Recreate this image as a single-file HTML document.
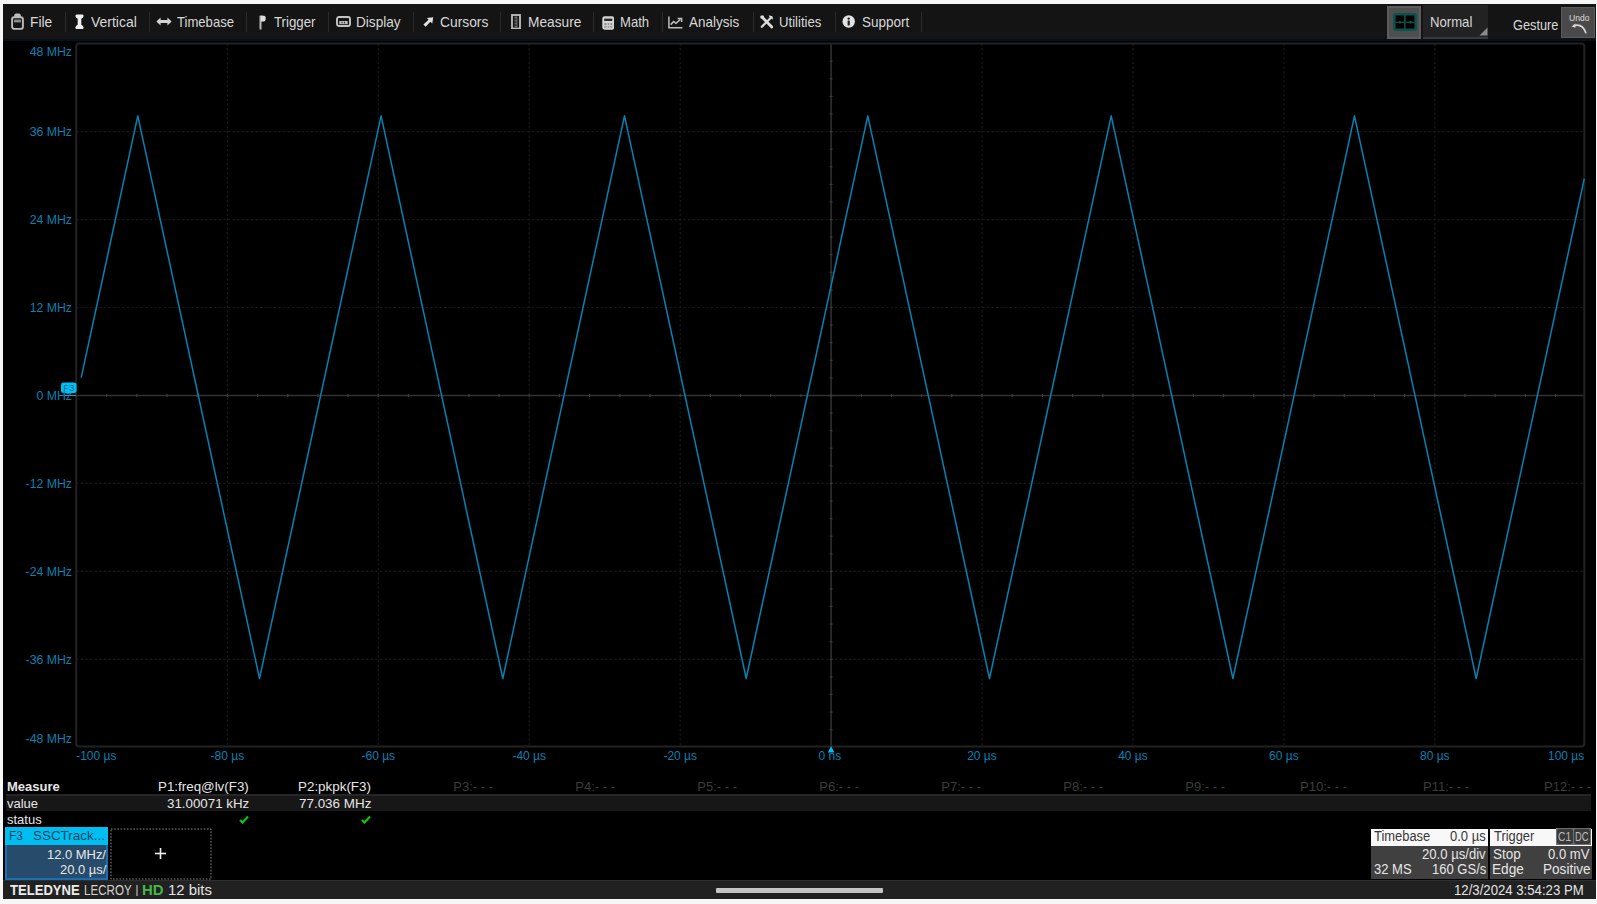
<!DOCTYPE html>
<html><head><meta charset="utf-8">
<style>
html,body{margin:0;padding:0;}
body{width:1597px;height:904px;background:#f6f6f6;position:relative;overflow:hidden;font-family:"Liberation Sans",sans-serif;}
.abs{position:absolute}
#frame{position:absolute;left:3px;top:4px;width:1593px;height:894px;background:#000;}
#tbar{position:absolute;left:3px;top:4px;width:1593px;height:35px;background:#141414;}
#tbline{position:absolute;left:3px;top:39px;width:1593px;height:2px;background:#07111a;}
.ic{position:absolute;line-height:0}
.ic svg{display:block}
.tt{position:absolute;top:13.5px;font-size:14.5px;line-height:16px;color:#d8d8d8;white-space:nowrap;transform-origin:0 0}
.sep{position:absolute;top:12px;width:1px;height:20px;background:#2a2a2a}
svg#plot{position:absolute;left:0;top:0}
.g{stroke:#181818;stroke-width:1.2;stroke-dasharray:2.3 2.3}
.ax{stroke:#323232;stroke-width:1.5}
.tk{stroke:#3c3c3c;stroke-width:1.2}
.bd{fill:none;stroke:#222;stroke-width:2}
.tr{fill:none;stroke:#0682b2;stroke-width:1.5;stroke-linejoin:round}
.yl{position:absolute;left:0;width:72px;text-align:right;font-size:12.3px;line-height:14px;color:#0b80b2;white-space:nowrap}
.xl{position:absolute;top:749px;font-size:12px;line-height:14px;color:#0b80b2;white-space:nowrap}
.mh{position:absolute;top:779px;width:130px;text-align:right;font-size:13px;line-height:15px;color:#e6e6e6;white-space:nowrap}
.mh.dim{color:#3c3c3c}
.mv{position:absolute;top:796px;width:130px;text-align:right;font-size:13px;line-height:15px;color:#e6e6e6;white-space:nowrap}
.ck{position:absolute;top:815px}
.ft{position:absolute;white-space:nowrap;transform-origin:0 0}
.lab{position:absolute;font-size:13px;line-height:15px;color:#e6e6e6;white-space:nowrap}
</style></head><body>
<div id="frame"></div>
<div id="tbar"></div>
<div id="tbline"></div>
<div class="ic" style="left:11px;top:13.3px"><svg width="13" height="17" viewBox="0 0 13 17"><rect x="1.1" y="4.3" width="10.8" height="11.6" rx="2.2" fill="none" stroke="#bcbcbc" stroke-width="1.9"/><path d="M3.2,4.6 L3.2,2.6 Q3.2,0.6 5.2,0.6 L7.8,0.6 Q9.8,0.6 9.8,2.6 L9.8,4.6 Z" fill="#bcbcbc"/><rect x="3" y="6.6" width="7" height="2.8" fill="#8c8c8c"/></svg></div><div class="tt" style="left:30.00px;transform:scaleX(0.952)">File</div><div class="ic" style="left:74.5px;top:13.6px"><svg width="9" height="15.5" viewBox="0 0 9 15.5"><path d="M1.5,0.5 L7.5,0.5 Q8.6,0.5 8.6,2 Q8.6,3.6 6.3,4.8 L6.3,10.7 Q8.6,11.9 8.6,13.5 Q8.6,15 7.5,15 L1.5,15 Q0.4,15 0.4,13.5 Q0.4,11.9 2.7,10.7 L2.7,4.8 Q0.4,3.6 0.4,2 Q0.4,0.5 1.5,0.5 Z" fill="#f0f0f0"/></svg></div><div class="tt" style="left:91.43px;transform:scaleX(0.964)">Vertical</div><div class="ic" style="left:156px;top:17.3px"><svg width="16" height="9" viewBox="0 0 16 9"><path d="M0.4,4.5 L4.6,0.6 L4.6,3.1 L11.4,3.1 L11.4,0.6 L15.6,4.5 L11.4,8.4 L11.4,5.9 L4.6,5.9 L4.6,8.4 Z" fill="#d4d4d4"/></svg></div><div class="tt" style="left:176.54px;transform:scaleX(0.903)">Timebase</div><div class="ic" style="left:259.3px;top:14.5px"><svg width="7" height="15" viewBox="0 0 7 15"><rect x="0.5" y="0.5" width="2" height="14" rx="0.6" fill="#b8b8b8"/><path d="M2,0.5 L5,0.8 Q6.6,1 6.6,2.6 L6.6,4.6 Q6.6,6.2 5,6.4 L2,6.6 Z" fill="#e0e0e0"/></svg></div><div class="tt" style="left:274.24px;transform:scaleX(0.914)">Trigger</div><div class="ic" style="left:335.8px;top:16.4px"><svg width="15" height="11" viewBox="0 0 15 11"><rect x="1" y="1" width="13" height="9" rx="2" fill="none" stroke="#c4c4c4" stroke-width="1.9"/><rect x="3.3" y="5" width="8.4" height="3.2" fill="#bdbdbd"/><rect x="5.5" y="5.8" width="1" height="1.6" fill="#333"/><rect x="8" y="5.8" width="1" height="1.6" fill="#333"/></svg></div><div class="tt" style="left:355.71px;transform:scaleX(0.938)">Display</div><div class="ic" style="left:423px;top:16.8px"><svg width="10.5" height="10" viewBox="0 0 10.5 10"><path d="M10.2,0.2 L3.8,0.9 L5.6,2.8 L0.4,7.5 L2.6,9.8 L7.4,4.8 L9.3,6.6 Z" fill="#e2e2e2"/></svg></div><div class="tt" style="left:440.01px;transform:scaleX(0.953)">Cursors</div><div class="ic" style="left:511.2px;top:13.8px"><svg width="10" height="15.5" viewBox="0 0 10 15.5"><rect x="1" y="1" width="8" height="13.5" fill="none" stroke="#c0c0c0" stroke-width="1.8"/><rect x="3.5" y="2.5" width="3" height="10.5" fill="#6a6a6a"/><rect x="3.5" y="4.5" width="2" height="1.2" fill="#1a1a1a"/><rect x="3.5" y="7.5" width="2" height="1.2" fill="#1a1a1a"/><rect x="3.5" y="10.5" width="2" height="1.2" fill="#1a1a1a"/></svg></div><div class="tt" style="left:527.60px;transform:scaleX(0.945)">Measure</div><div class="ic" style="left:601.7px;top:15.7px"><svg width="12.5" height="14" viewBox="0 0 12.5 14"><rect x="0.3" y="0.3" width="11.9" height="13.4" rx="2.4" fill="#d6d6d6"/><rect x="2.2" y="2.6" width="8.1" height="2.4" fill="#2a2a2a"/><rect x="2.2" y="7" width="8.1" height="4.8" fill="#9a9a9a"/><rect x="4.8" y="7" width="0.9" height="4.8" fill="#d6d6d6"/><rect x="7.3" y="7" width="0.9" height="4.8" fill="#d6d6d6"/><rect x="2.2" y="9.2" width="8.1" height="0.9" fill="#d6d6d6"/></svg></div><div class="tt" style="left:620.36px;transform:scaleX(0.901)">Math</div><div class="ic" style="left:668.4px;top:16px"><svg width="15" height="12.5" viewBox="0 0 15 12.5"><path d="M0.9,0.5 L0.9,11.7 L14.4,11.7" fill="none" stroke="#bdbdbd" stroke-width="1.5"/><path d="M2.6,8.6 L5.6,5.6 L8,7.4 L12.4,3.4" fill="none" stroke="#bdbdbd" stroke-width="1.5"/><path d="M9.6,2.4 L13.6,2.4 L13.6,6" fill="none" stroke="#bdbdbd" stroke-width="1.5"/></svg></div><div class="tt" style="left:689.30px;transform:scaleX(0.929)">Analysis</div><div class="ic" style="left:759.8px;top:14.9px"><svg width="13.5" height="14" viewBox="0 0 13.5 14"><path d="M2.2,2.2 L11.8,12" stroke="#dcdcdc" stroke-width="2.8" stroke-linecap="round"/><path d="M11.4,2.2 L1.8,11.8" stroke="#dcdcdc" stroke-width="2.2" stroke-linecap="round"/><path d="M8.6,0.5 Q13.3,0.2 13,4.8 L11.2,3 L10.3,3.6 Z" fill="#dcdcdc"/><rect x="0.4" y="0.4" width="3.6" height="3" rx="1" fill="#dcdcdc"/></svg></div><div class="tt" style="left:779.11px;transform:scaleX(0.908)">Utilities</div><div class="ic" style="left:841.8px;top:15.2px"><svg width="13.5" height="13" viewBox="0 0 13.5 13"><circle cx="6.7" cy="6.5" r="6.2" fill="#e2e2e2"/><circle cx="6.7" cy="3.6" r="1.2" fill="#1e1e1e"/><rect x="5.6" y="5.6" width="2.2" height="4.8" rx="0.4" fill="#1e1e1e"/></svg></div><div class="tt" style="left:861.89px;transform:scaleX(0.930)">Support</div><div class="sep" style="left:64.5px"></div><div class="sep" style="left:148.9px"></div><div class="sep" style="left:245.9px"></div><div class="sep" style="left:327.8px"></div><div class="sep" style="left:412.8px"></div><div class="sep" style="left:500.3px"></div><div class="sep" style="left:592.8px"></div><div class="sep" style="left:661.8px"></div><div class="sep" style="left:752.8px"></div><div class="sep" style="left:834.9px"></div><div class="sep" style="left:920.9px"></div>
<!-- right toolbar -->
<div class="abs" style="left:1387.4px;top:5.5px;width:34px;height:33px;background:#4e4e4e;box-sizing:border-box;border:2px solid #5c5c5c"></div>
<svg class="abs" style="left:1393px;top:13.4px" width="24" height="18" viewBox="0 0 24 18"><rect x="1.3" y="1.3" width="21.4" height="15.4" rx="1.5" fill="#000" stroke="#0a534e" stroke-width="2.6"/><line x1="11.8" y1="1" x2="11.8" y2="17" stroke="#0a504b" stroke-width="1.6"/><line x1="1" y1="9.3" x2="23" y2="9.3" stroke="#0a504b" stroke-width="1.3"/><circle cx="7" cy="9.3" r="1.2" fill="#0b5d57"/><circle cx="17.6" cy="9.3" r="1.2" fill="#0b5d57"/></svg>
<div class="abs" style="left:1423px;top:4.5px;width:64.5px;height:34px;background:#222"></div>
<div class="abs" style="left:1423px;top:36.5px;width:64.5px;height:2px;background:#3a3a3a"></div>
<svg class="abs" style="left:1479px;top:27px" width="9" height="9" viewBox="0 0 9 9"><path d="M8.5,0.5 L8.5,8.5 L0.5,8.5 Z" fill="#8a8a8a"/></svg>
<div class="tt" style="left:1430.45px;transform:scaleX(0.906)">Normal</div>
<div class="tt" style="left:1512.96px;top:16.5px;transform:scaleX(0.881)">Gesture</div>
<div class="abs" style="left:1561.3px;top:7px;width:34px;height:30.5px;background:#4a4a4a;box-sizing:border-box;border:1px solid #5a5a5a"></div>
<div class="ft" style="left:1568.56px;top:12.21px;font-size:9.5px;line-height:11px;color:#dcdcdc;transform:scaleX(0.898);">Undo</div>
<svg class="abs" style="left:1570px;top:22px" width="18" height="13" viewBox="0 0 18 13"><path d="M4,3.6 Q12.5,1.2 15.8,10.8" fill="none" stroke="#d8d8d8" stroke-width="1.6" stroke-linecap="round"/><path d="M1.5,4.4 L5.6,1.6 L5.4,5.8 Z" fill="#d8d8d8"/></svg>

<svg id="plot" width="1597" height="904">
<line x1="227.4" y1="43.5" x2="227.4" y2="746.5" class="g"/><line x1="378.3" y1="43.5" x2="378.3" y2="746.5" class="g"/><line x1="529.2" y1="43.5" x2="529.2" y2="746.5" class="g"/><line x1="680.2" y1="43.5" x2="680.2" y2="746.5" class="g"/><line x1="982.0" y1="43.5" x2="982.0" y2="746.5" class="g"/><line x1="1133.0" y1="43.5" x2="1133.0" y2="746.5" class="g"/><line x1="1283.9" y1="43.5" x2="1283.9" y2="746.5" class="g"/><line x1="1434.8" y1="43.5" x2="1434.8" y2="746.5" class="g"/><line x1="76.2" y1="131.6" x2="1584.3" y2="131.6" class="g"/><line x1="76.2" y1="219.6" x2="1584.3" y2="219.6" class="g"/><line x1="76.2" y1="307.5" x2="1584.3" y2="307.5" class="g"/><line x1="76.2" y1="483.4" x2="1584.3" y2="483.4" class="g"/><line x1="76.2" y1="571.4" x2="1584.3" y2="571.4" class="g"/><line x1="76.2" y1="659.3" x2="1584.3" y2="659.3" class="g"/><line x1="831.1" y1="43.5" x2="831.1" y2="746.5" class="ax"/><line x1="76.2" y1="395.5" x2="1584.3" y2="395.5" class="ax"/><line x1="106.7" y1="394.0" x2="106.7" y2="397.0" class="tk"/><line x1="136.8" y1="394.0" x2="136.8" y2="397.0" class="tk"/><line x1="167.0" y1="394.0" x2="167.0" y2="397.0" class="tk"/><line x1="197.2" y1="394.0" x2="197.2" y2="397.0" class="tk"/><line x1="227.4" y1="394.0" x2="227.4" y2="397.0" class="tk"/><line x1="257.6" y1="394.0" x2="257.6" y2="397.0" class="tk"/><line x1="287.8" y1="394.0" x2="287.8" y2="397.0" class="tk"/><line x1="318.0" y1="394.0" x2="318.0" y2="397.0" class="tk"/><line x1="348.1" y1="394.0" x2="348.1" y2="397.0" class="tk"/><line x1="378.3" y1="394.0" x2="378.3" y2="397.0" class="tk"/><line x1="408.5" y1="394.0" x2="408.5" y2="397.0" class="tk"/><line x1="438.7" y1="394.0" x2="438.7" y2="397.0" class="tk"/><line x1="468.9" y1="394.0" x2="468.9" y2="397.0" class="tk"/><line x1="499.1" y1="394.0" x2="499.1" y2="397.0" class="tk"/><line x1="529.2" y1="394.0" x2="529.2" y2="397.0" class="tk"/><line x1="559.4" y1="394.0" x2="559.4" y2="397.0" class="tk"/><line x1="589.6" y1="394.0" x2="589.6" y2="397.0" class="tk"/><line x1="619.8" y1="394.0" x2="619.8" y2="397.0" class="tk"/><line x1="650.0" y1="394.0" x2="650.0" y2="397.0" class="tk"/><line x1="680.2" y1="394.0" x2="680.2" y2="397.0" class="tk"/><line x1="710.4" y1="394.0" x2="710.4" y2="397.0" class="tk"/><line x1="740.5" y1="394.0" x2="740.5" y2="397.0" class="tk"/><line x1="770.7" y1="394.0" x2="770.7" y2="397.0" class="tk"/><line x1="800.9" y1="394.0" x2="800.9" y2="397.0" class="tk"/><line x1="831.1" y1="394.0" x2="831.1" y2="397.0" class="tk"/><line x1="861.3" y1="394.0" x2="861.3" y2="397.0" class="tk"/><line x1="891.5" y1="394.0" x2="891.5" y2="397.0" class="tk"/><line x1="921.7" y1="394.0" x2="921.7" y2="397.0" class="tk"/><line x1="951.8" y1="394.0" x2="951.8" y2="397.0" class="tk"/><line x1="982.0" y1="394.0" x2="982.0" y2="397.0" class="tk"/><line x1="1012.2" y1="394.0" x2="1012.2" y2="397.0" class="tk"/><line x1="1042.4" y1="394.0" x2="1042.4" y2="397.0" class="tk"/><line x1="1072.6" y1="394.0" x2="1072.6" y2="397.0" class="tk"/><line x1="1102.8" y1="394.0" x2="1102.8" y2="397.0" class="tk"/><line x1="1132.9" y1="394.0" x2="1132.9" y2="397.0" class="tk"/><line x1="1163.1" y1="394.0" x2="1163.1" y2="397.0" class="tk"/><line x1="1193.3" y1="394.0" x2="1193.3" y2="397.0" class="tk"/><line x1="1223.5" y1="394.0" x2="1223.5" y2="397.0" class="tk"/><line x1="1253.7" y1="394.0" x2="1253.7" y2="397.0" class="tk"/><line x1="1283.9" y1="394.0" x2="1283.9" y2="397.0" class="tk"/><line x1="1314.1" y1="394.0" x2="1314.1" y2="397.0" class="tk"/><line x1="1344.2" y1="394.0" x2="1344.2" y2="397.0" class="tk"/><line x1="1374.4" y1="394.0" x2="1374.4" y2="397.0" class="tk"/><line x1="1404.6" y1="394.0" x2="1404.6" y2="397.0" class="tk"/><line x1="1434.8" y1="394.0" x2="1434.8" y2="397.0" class="tk"/><line x1="1465.0" y1="394.0" x2="1465.0" y2="397.0" class="tk"/><line x1="1495.2" y1="394.0" x2="1495.2" y2="397.0" class="tk"/><line x1="1525.4" y1="394.0" x2="1525.4" y2="397.0" class="tk"/><line x1="1555.5" y1="394.0" x2="1555.5" y2="397.0" class="tk"/><line x1="829.6" y1="61.2" x2="832.6" y2="61.2" class="tk"/><line x1="829.6" y1="78.8" x2="832.6" y2="78.8" class="tk"/><line x1="829.6" y1="96.4" x2="832.6" y2="96.4" class="tk"/><line x1="829.6" y1="114.0" x2="832.6" y2="114.0" class="tk"/><line x1="829.6" y1="131.6" x2="832.6" y2="131.6" class="tk"/><line x1="829.6" y1="149.2" x2="832.6" y2="149.2" class="tk"/><line x1="829.6" y1="166.8" x2="832.6" y2="166.8" class="tk"/><line x1="829.6" y1="184.4" x2="832.6" y2="184.4" class="tk"/><line x1="829.6" y1="202.0" x2="832.6" y2="202.0" class="tk"/><line x1="829.6" y1="219.6" x2="832.6" y2="219.6" class="tk"/><line x1="829.6" y1="237.1" x2="832.6" y2="237.1" class="tk"/><line x1="829.6" y1="254.7" x2="832.6" y2="254.7" class="tk"/><line x1="829.6" y1="272.3" x2="832.6" y2="272.3" class="tk"/><line x1="829.6" y1="289.9" x2="832.6" y2="289.9" class="tk"/><line x1="829.6" y1="307.5" x2="832.6" y2="307.5" class="tk"/><line x1="829.6" y1="325.1" x2="832.6" y2="325.1" class="tk"/><line x1="829.6" y1="342.7" x2="832.6" y2="342.7" class="tk"/><line x1="829.6" y1="360.3" x2="832.6" y2="360.3" class="tk"/><line x1="829.6" y1="377.9" x2="832.6" y2="377.9" class="tk"/><line x1="829.6" y1="395.4" x2="832.6" y2="395.4" class="tk"/><line x1="829.6" y1="413.0" x2="832.6" y2="413.0" class="tk"/><line x1="829.6" y1="430.6" x2="832.6" y2="430.6" class="tk"/><line x1="829.6" y1="448.2" x2="832.6" y2="448.2" class="tk"/><line x1="829.6" y1="465.8" x2="832.6" y2="465.8" class="tk"/><line x1="829.6" y1="483.4" x2="832.6" y2="483.4" class="tk"/><line x1="829.6" y1="501.0" x2="832.6" y2="501.0" class="tk"/><line x1="829.6" y1="518.6" x2="832.6" y2="518.6" class="tk"/><line x1="829.6" y1="536.2" x2="832.6" y2="536.2" class="tk"/><line x1="829.6" y1="553.8" x2="832.6" y2="553.8" class="tk"/><line x1="829.6" y1="571.4" x2="832.6" y2="571.4" class="tk"/><line x1="829.6" y1="588.9" x2="832.6" y2="588.9" class="tk"/><line x1="829.6" y1="606.5" x2="832.6" y2="606.5" class="tk"/><line x1="829.6" y1="624.1" x2="832.6" y2="624.1" class="tk"/><line x1="829.6" y1="641.7" x2="832.6" y2="641.7" class="tk"/><line x1="829.6" y1="659.3" x2="832.6" y2="659.3" class="tk"/><line x1="829.6" y1="676.9" x2="832.6" y2="676.9" class="tk"/><line x1="829.6" y1="694.5" x2="832.6" y2="694.5" class="tk"/><line x1="829.6" y1="712.1" x2="832.6" y2="712.1" class="tk"/><line x1="829.6" y1="729.7" x2="832.6" y2="729.7" class="tk"/><rect x="76.2" y="43.5" width="1508.1" height="703.0" rx="3" class="bd"/><path d="M81.2,377.6 L137.8,115.8 L259.5,678.5 L381.1,115.8 L502.8,678.5 L624.5,115.8 L746.2,678.5 L867.8,115.8 L989.5,678.5 L1111.2,115.8 L1232.9,678.5 L1354.5,115.8 L1476.2,678.5 L1584.3,178.7" class="tr"/><line x1="60" y1="395.5" x2="76.2" y2="395.5" stroke="#0aa8e0" stroke-width="1"/><rect x="61" y="382.5" width="15.5" height="10.5" rx="2.5" fill="#00bff2"/><text x="68.8" y="391.3" font-size="9.5" fill="#0a6a90" text-anchor="middle" font-family="Liberation Sans">F3</text><path d="M831.1,746 L834.3,752.5 L827.9,752.5 Z" fill="#00bff2"/>
</svg>
<div class="yl" style="top:45.0px">48 MHz</div><div class="yl" style="top:125.1px">36 MHz</div><div class="yl" style="top:213.1px">24 MHz</div><div class="yl" style="top:301.0px">12 MHz</div><div class="yl" style="top:388.9px">0 MHz</div><div class="yl" style="top:476.9px">-12 MHz</div><div class="yl" style="top:564.9px">-24 MHz</div><div class="yl" style="top:652.8px">-36 MHz</div><div class="yl" style="top:732.0px">-48 MHz</div>
<div class="xl" style="left:76.2px">-100 µs</div><div class="xl" style="left:177.4px;width:100px;text-align:center">-80 µs</div><div class="xl" style="left:328.3px;width:100px;text-align:center">-60 µs</div><div class="xl" style="left:479.2px;width:100px;text-align:center">-40 µs</div><div class="xl" style="left:630.2px;width:100px;text-align:center">-20 µs</div><div class="xl" style="left:779.9px;width:100px;text-align:center">0 ns</div><div class="xl" style="left:932.0px;width:100px;text-align:center">20 µs</div><div class="xl" style="left:1083.0px;width:100px;text-align:center">40 µs</div><div class="xl" style="left:1233.9px;width:100px;text-align:center">60 µs</div><div class="xl" style="left:1384.8px;width:100px;text-align:center">80 µs</div><div class="xl" style="left:1484.3px;width:100px;text-align:right">100 µs</div>

<div class="lab" style="left:7px;top:779px;font-weight:bold">Measure</div>
<div class="abs" style="left:6px;top:794px;width:1585px;height:17px;background:#171717;border-top:2.5px solid #262626;box-sizing:border-box"></div>
<div class="lab" style="left:7px;top:796px">value</div>
<div class="lab" style="left:7px;top:812px">status</div>
<svg class="ck" style="left:239.0px" width="10" height="9" viewBox="0 0 10 9"><path d="M1,5 L3.5,7.5 L9,1.5" fill="none" stroke="#08c808" stroke-width="2.2"/></svg><svg class="ck" style="left:361.0px" width="10" height="9" viewBox="0 0 10 9"><path d="M1,5 L3.5,7.5 L9,1.5" fill="none" stroke="#08c808" stroke-width="2.2"/></svg><div class="mh dim" style="left:363.0px">P3:- - -</div><div class="mh dim" style="left:485.0px">P4:- - -</div><div class="mh dim" style="left:607.0px">P5:- - -</div><div class="mh dim" style="left:729.0px">P6:- - -</div><div class="mh dim" style="left:851.0px">P7:- - -</div><div class="mh dim" style="left:973.0px">P8:- - -</div><div class="mh dim" style="left:1095.0px">P9:- - -</div><div class="mh dim" style="left:1217.0px">P10:- - -</div><div class="mh dim" style="left:1339.0px">P11:- - -</div><div class="mh dim" style="left:1461.0px">P12:- - -</div><div class="ft" style="left:158.13px;top:779.00px;font-size:13px;line-height:16px;color:#e6e6e6;transform:scaleX(1.028);">P1:freq@lv(F3)</div><div class="ft" style="left:166.57px;top:795.80px;font-size:13px;line-height:16px;color:#e6e6e6;transform:scaleX(1.025);">31.00071 kHz</div><div class="ft" style="left:298.43px;top:779.00px;font-size:13px;line-height:16px;color:#e6e6e6;transform:scaleX(1.030);">P2:pkpk(F3)</div><div class="ft" style="left:298.83px;top:795.80px;font-size:13px;line-height:16px;color:#e6e6e6;transform:scaleX(1.032);">77.036 MHz</div>

<div class="abs" style="left:5.3px;top:827.4px;width:103px;height:52.2px;background:#274b6a;box-sizing:border-box;border:2px solid #1670b8;border-top:0"></div>
<div class="abs" style="left:5.3px;top:827.4px;width:103px;height:18px;background:#00bdf2"></div>
<div class="ft" style="left:9.34px;top:828.40px;font-size:13px;line-height:16px;color:#06485e;transform:scaleX(0.920);">F3</div>
<div class="ft" style="left:32.90px;top:828.40px;font-size:13px;line-height:16px;color:#06485e;transform:scaleX(1.033);">SSCTrack...</div>
<div class="ft" style="left:46.83px;top:846.70px;font-size:13px;line-height:16px;color:#e8e8e8;transform:scaleX(0.995);">12.0 MHz/</div>
<div class="ft" style="left:59.55px;top:861.50px;font-size:13px;line-height:16px;color:#e8e8e8;transform:scaleX(0.994);">20.0 µs/</div>
<svg class="abs" style="left:110px;top:828px" width="102" height="52"><rect x="1" y="1" width="100" height="50" fill="none" stroke="#8a8a8a" stroke-width="1" stroke-dasharray="1.6 1.6"/></svg>
<svg class="abs" style="left:153.5px;top:846.5px" width="13" height="13" viewBox="0 0 13 13"><rect x="5.7" y="1" width="1.6" height="11" fill="#f0f0f0"/><rect x="1" y="5.7" width="11" height="1.6" fill="#f0f0f0"/></svg>
<div class="abs" style="left:1370.7px;top:828.5px;width:117.2px;height:50.7px;background:#404040"></div>
<div class="abs" style="left:1370.7px;top:828.5px;width:117.2px;height:17px;background:#f8f8f8"></div>
<div class="ft" style="left:1374.34px;top:828.15px;font-size:14px;line-height:17px;color:#383838;transform:scaleX(0.922);">Timebase</div>
<div class="ft" style="left:1450.48px;top:828.15px;font-size:14px;line-height:17px;color:#383838;transform:scaleX(0.928);">0.0 µs</div>
<div class="ft" style="left:1422.14px;top:845.65px;font-size:14px;line-height:17px;color:#e6e6e6;transform:scaleX(0.936);">20.0 µs/div</div>
<div class="ft" style="left:1373.68px;top:861.15px;font-size:14px;line-height:17px;color:#e6e6e6;transform:scaleX(0.929);">32 MS</div>
<div class="ft" style="left:1431.82px;top:861.15px;font-size:14px;line-height:17px;color:#e6e6e6;transform:scaleX(0.931);">160 GS/s</div>
<div class="abs" style="left:1490.3px;top:828.5px;width:101.3px;height:50.7px;background:#404040"></div>
<div class="abs" style="left:1490.3px;top:828.5px;width:101.3px;height:17px;background:#f8f8f8"></div>
<div class="abs" style="left:1556px;top:828.3px;width:35.4px;height:17.1px;background:#6e6e6e"></div>
<div class="abs" style="left:1557px;top:829.3px;width:15.8px;height:15.1px;background:#3a3a3a;border-radius:2px"></div>
<div class="abs" style="left:1574px;top:829.3px;width:16.4px;height:15.1px;background:#3a3a3a;border-radius:2px"></div>
<div class="ft" style="left:1557.89px;top:829.87px;font-size:12.5px;line-height:15px;color:#bcbcbc;transform:scaleX(0.820);">C1</div>
<div class="ft" style="left:1575.15px;top:829.87px;font-size:12.5px;line-height:15px;color:#bcbcbc;transform:scaleX(0.749);">DC</div>
<div class="ft" style="left:1493.84px;top:828.15px;font-size:14px;line-height:17px;color:#383838;transform:scaleX(0.919);">Trigger</div>
<div class="ft" style="left:1492.69px;top:845.65px;font-size:14px;line-height:17px;color:#e6e6e6;transform:scaleX(0.961);">Stop</div>
<div class="ft" style="left:1548.18px;top:845.65px;font-size:14px;line-height:17px;color:#e6e6e6;transform:scaleX(0.934);">0.0 mV</div>
<div class="ft" style="left:1492.21px;top:861.15px;font-size:14px;line-height:17px;color:#e6e6e6;transform:scaleX(0.976);">Edge</div>
<div class="ft" style="left:1543.41px;top:861.15px;font-size:14px;line-height:17px;color:#e6e6e6;transform:scaleX(0.969);">Positive</div>
<div class="abs" style="left:3px;top:880px;width:1593px;height:18.5px;background:#212121;border-top:1px solid #2c3030;box-sizing:border-box"></div>
<div class="abs" style="left:716px;top:888px;width:166.5px;height:5px;background:#c4c4c4;border-radius:1px"></div>
<div class="ft" style="left:10.37px;top:882.45px;font-size:14px;line-height:17px;font-weight:bold;color:#ececec;transform:scaleX(0.933);">TELEDYNE</div>
<div class="ft" style="left:83.87px;top:882.45px;font-size:14px;line-height:17px;color:#d4d4d4;transform:scaleX(0.828);">LECROY</div>
<div class="abs" style="left:136.2px;top:884.5px;width:1.4px;height:11px;background:#7a7a7a"></div>
<div class="ft" style="left:142.13px;top:882.45px;font-size:14px;line-height:17px;font-weight:bold;color:#44b844;transform:scaleX(1.065);">HD</div>
<div class="ft" style="left:167.98px;top:882.45px;font-size:14px;line-height:17px;color:#e4e4e4;transform:scaleX(1.063);">12 bits</div>
<div class="ft" style="left:1453.71px;top:882.15px;font-size:14px;line-height:17px;color:#e4e4e4;transform:scaleX(0.941);">12/3/2024 3:54:23 PM</div>
</body></html>
